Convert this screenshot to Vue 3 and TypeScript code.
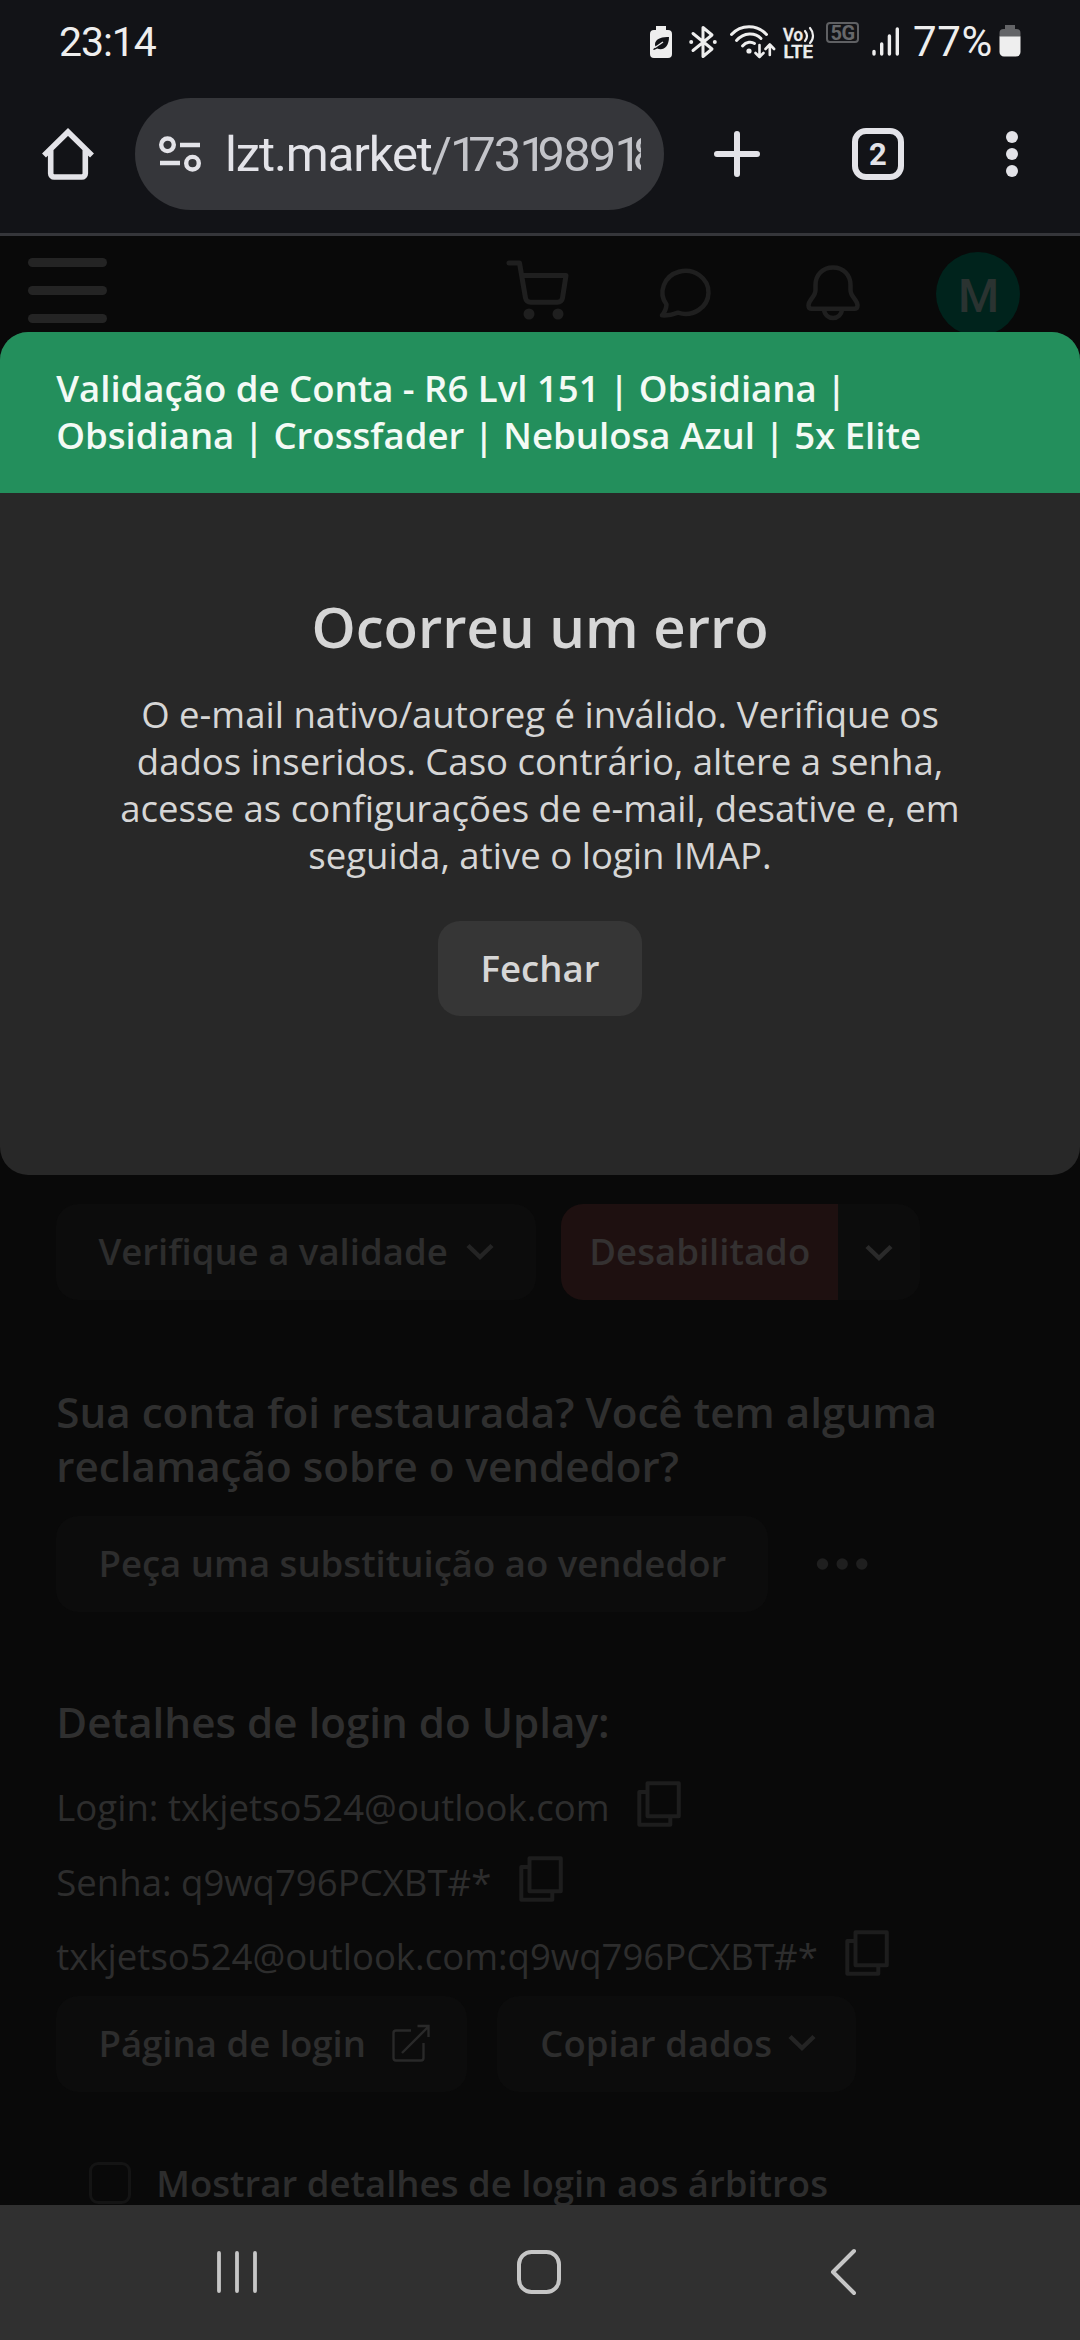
<script setup lang="ts">
interface Credential {
  text: string
}

const urlDigits: string[] = '173198918'.split('')

const credentials: Credential[] = [
  { text: 'Login: txkjetso524@outlook.com' },
  { text: 'Senha: q9wq796PCXBT#*' },
  { text: 'txkjetso524@outlook.com:q9wq796PCXBT#*' },
]
</script>

<template>
  <div class="phone">
    <header class="status-bar">
      <span class="clock">23:14</span>
      <div class="status-icons">
        <svg class="i-saver" width="22" height="32" viewBox="0 0 22 32">
          <path fill="#eee" d="M6 0h10v4h2a4 4 0 0 1 4 4v20a4 4 0 0 1-4 4H4a4 4 0 0 1-4-4V8a4 4 0 0 1 4-4h2z" />
          <path fill="#121317" d="M19 11c-8-.6-14 2.400-14 7.400 0 1 .4 1.900.9 2.600L3 23.200l1 .8 3.200-1.500c5.800 2.300 11.800-1.300 11.800-11.500z" />
          <path fill="none" stroke="#eee" stroke-width="1.300" d="M5 21.500 13 16" />
        </svg>
        <svg class="i-bt" width="28" height="32" viewBox="0 0 28 32">
          <path fill="none" stroke="#eee" stroke-width="3" stroke-linejoin="round" stroke-linecap="round" d="M4 7.500l19 15.500-9 7.500v-29l9 7.500L4 24.500" />
          <circle cx="2.200" cy="16" r="2" fill="#eee" /><circle cx="25.800" cy="16" r="2" fill="#eee" />
        </svg>
        <svg class="i-wifi" width="46" height="34" viewBox="0 0 46 34">
          <g fill="none" stroke="#eee" stroke-width="3" stroke-linecap="round">
            <path d="M1.500 9.500C11-.8 27-.8 36.500 9.500" />
            <path d="M6.500 15.500C14 7.200 25 7.200 31 13.500" />
            <path d="M12.500 21c4-4.500 9-4.500 12-2.500" />
            <path stroke-width="2.600" stroke-linejoin="round" d="M29.500 20v12M25.500 28l4 4 4-4M39.800 30V19.500M35.500 24l4.300-4.500 4.300 4.500" />
          </g>
          <circle cx="19" cy="26" r="2.600" fill="#eee" />
        </svg>
        <svg class="i-volte" width="32" height="34" viewBox="0 0 32 34">
          <text x="0" y="14.500" textLength="20" lengthAdjust="spacingAndGlyphs" class="tiny">Vo</text>
          <path fill="none" stroke="#eee" stroke-width="2.200" stroke-linecap="round" d="M22 5c2.400 3 2.400 7 0 10M27 2c4 4.600 4 11 0 15" />
          <text x="0.500" y="32" textLength="29.500" lengthAdjust="spacingAndGlyphs" class="tiny">LTE</text>
        </svg>
        <span class="badge-5g">5G</span>
        <svg class="i-signal" width="28" height="30" viewBox="0 0 28 30">
          <path fill="none" stroke="#eee" stroke-width="3.400" stroke-linecap="round" d="M2 24.500v2.500M9.700 17v10M17.400 9v18M25.300 2v25" />
        </svg>
        <span class="percent">77%</span>
        <svg class="i-battery" width="22" height="32" viewBox="0 0 22 32">
          <path fill="#636467" d="M6 0h10v4h1.500a4 4 0 0 1 4 4v4H.5V8a4 4 0 0 1 4-4H6z" />
          <path fill="#eee" d="M.5 11.500h21V27a4.500 4.500 0 0 1-4.500 4.500H5A4.500 4.500 0 0 1 .5 27z" />
        </svg>
      </div>
    </header>

    <nav class="toolbar">
      <svg class="i-home" width="52" height="52" viewBox="0 0 52 52">
        <path fill="none" stroke="#e3e3e8" stroke-width="5.600" stroke-linejoin="miter" d="M2 27.500 26 4l24 23.500M8.700 22v23.500a3.500 3.500 0 0 0 3.500 3.500h27.600a3.500 3.500 0 0 0 3.500-3.500V22" />
      </svg>
      <div class="address">
        <svg class="i-tune" width="42" height="36" viewBox="0 0 42 36">
          <g fill="none" stroke="#e3e3e8" stroke-width="4.400">
            <circle cx="8.500" cy="8.800" r="6.300" /><path d="M21 9h20M1 27h20" /><circle cx="33.500" cy="27.200" r="6.300" />
          </g>
        </svg>
        <div class="url"><span class="host">lzt.market</span><span class="path"><span>/</span><span v-for="(d, i) in urlDigits" :key="i" :class="{ one: d === '1' }">{{ d }}</span></span></div>
      </div>
      <svg class="i-plus" width="48" height="48" viewBox="0 0 48 48">
        <path fill="none" stroke="#e3e3e8" stroke-width="6" stroke-linecap="round" d="M24 4v40M4 24h40" />
      </svg>
      <span class="tabs">2</span>
      <svg class="i-more" width="12" height="48" viewBox="0 0 12 48">
        <g fill="#e3e3e8"><circle cx="6" cy="7" r="6" /><circle cx="6" cy="24" r="6" /><circle cx="6" cy="41" r="6" /></g>
      </svg>
    </nav>

    <div class="page">
      <div class="site-header">
        <div class="burger"><i></i><i></i><i></i></div>
        <svg class="i-cart" width="64" height="60" viewBox="0 0 64 60">
          <path fill="none" stroke="#1f1f1f" stroke-width="5" stroke-linecap="round" stroke-linejoin="round" d="M3 3h10.500l6 35a5 5 0 0 0 5 4.300h27a5 5 0 0 0 5-4.300L60 15.500H16" />
          <circle cx="23" cy="54" r="5.500" fill="#1f1f1f" /><circle cx="52" cy="54" r="5.500" fill="#1f1f1f" />
        </svg>
        <svg class="i-chat" width="52" height="50" viewBox="0 0 52 50">
          <path fill="none" stroke="#1f1f1f" stroke-width="4.500" stroke-linejoin="round" d="M7.500 36.500A23 21.500 0 1 1 19 44.700c-5 2-10.500 3-16 2.600C6 44 7.300 40 7.500 36.500z" />
        </svg>
        <svg class="i-bell" width="54" height="56" viewBox="0 0 54 56">
          <path fill="none" stroke="#1f1f1f" stroke-width="4.500" stroke-linejoin="round" d="M27 2.500c-10.500 0-17.500 7.500-17.500 17.500v5c0 7-7 9.500-7 15.500 0 2 1.300 3.300 3.300 3.300h42.400c2 0 3.300-1.300 3.300-3.300 0-6-7-8.500-7-15.500v-5c0-10-7-17.500-17.500-17.500zM18 44c1 12 17 12 18 0" />
        </svg>
        <span class="avatar">M</span>
      </div>

      <main class="content">
        <div class="row">
          <div class="btn check"><span>Verifique a validade</span>
            <svg width="28" height="17" viewBox="0 0 28 17"><path class="chev" d="M2 2.500l12 11.500L26 2.500" /></svg>
          </div>
          <div class="split">
            <div class="danger"><span>Desabilitado</span></div>
            <div class="drop"><svg width="28" height="17" viewBox="0 0 28 17"><path class="chev light" d="M2 2.500l12 11.500L26 2.500" /></svg></div>
          </div>
        </div>

        <h2 class="question">Sua conta foi restaurada? Você tem alguma<br />reclamação sobre o vendedor?</h2>

        <div class="row">
          <div class="btn replace"><span>Peça uma substituição ao vendedor</span></div>
          <svg class="i-dots" width="52" height="14" viewBox="0 0 52 14">
            <g fill="#1f1f1f"><circle cx="6.500" cy="7" r="5.700" /><circle cx="26.200" cy="7" r="5.700" /><circle cx="45.800" cy="7" r="5.700" /></g>
          </svg>
        </div>

        <h2 class="login-title">Detalhes de login do Uplay:</h2>

        <div v-for="c in credentials" :key="c.text" class="credential">
          <span>{{ c.text }}</span>
          <svg width="44" height="46" viewBox="0 0 44 46">
            <path fill="none" stroke="#1d1d1d" stroke-width="4" stroke-linejoin="round" d="M10.500 2.300h31.300v33H10.500zM10.500 11H2.300v32.700h31V35.500" />
          </svg>
        </div>

        <div class="row actions">
          <div class="btn login"><span>Página de login</span>
            <svg width="38" height="38" viewBox="0 0 38 38"><path fill="none" stroke="#292929" stroke-width="2.400" d="M19 6.500H4a2.500 2.500 0 0 0-2.500 2.500v25A2.500 2.500 0 0 0 4 36.500h25a2.500 2.500 0 0 0 2.500-2.500V19M10 29 36 3M25.500 2h11v11" /></svg>
          </div>
          <div class="btn copy"><span>Copiar dados</span>
            <svg width="28" height="17" viewBox="0 0 28 17"><path class="chev" d="M2 2.500l12 11.500L26 2.500" /></svg>
          </div>
        </div>

        <label class="consent"><i class="box"></i><span>Mostrar detalhes de login aos árbitros</span></label>
      </main>

      <section class="dialog">
        <div class="dialog-title">Validação de Conta - R6 Lvl 151 | Obsidiana |<br />Obsidiana | Crossfader | Nebulosa Azul | 5x Elite</div>
        <div class="dialog-body">
          <h1>Ocorreu um erro</h1>
          <p>O e-mail nativo/autoreg é inválido. Verifique os<br />dados inseridos. Caso contrário, altere a senha,<br />acesse as configurações de e-mail, desative e, em<br />seguida, ative o login IMAP.</p>
          <button type="button">Fechar</button>
        </div>
      </section>
    </div>

    <footer class="system-nav">
      <svg width="42" height="46" viewBox="0 0 42 46"><path fill="none" stroke="#c6c6c6" stroke-width="3.800" stroke-linecap="round" d="M3 4v38M21 4v38M39 4v38" /></svg>
      <svg class="i-navhome" width="46" height="46" viewBox="0 0 46 46"><rect x="3" y="3" width="40" height="40" rx="12.500" fill="none" stroke="#c6c6c6" stroke-width="4" /></svg>
      <svg width="28" height="48" viewBox="0 0 28 48"><path fill="none" stroke="#c6c6c6" stroke-width="4" stroke-linecap="round" stroke-linejoin="round" d="M25 3 4 24l21 21" /></svg>
    </footer>
  </div>
</template>

<style>
body {
  background: #090909;
}
</style>

<style scoped>
* {
  box-sizing: border-box;
}
.phone {
  width: 1080px;
  height: 2340px;
  display: flex;
  flex-direction: column;
  overflow: hidden;
  background: #090909;
  font-family: "Open Sans", "Noto Sans", sans-serif;
  font-size: 36.5625px;
  white-space: nowrap;
}
svg {
  display: block;
  flex: none;
  overflow: visible;
}

.status-bar {
  flex: none;
  height: 82px;
  padding: 0 59px;
  display: flex;
  justify-content: space-between;
  align-items: flex-start;
  background: #121317;
  color: #eee;
  font-family: Roboto, sans-serif;
}
.clock {
  height: 82px;
  line-height: 84px;
  font-size: 41px;
  letter-spacing: -1.100px;
}
.status-icons {
  display: flex;
  align-items: flex-start;
}
.i-saver { margin: 26px 17px 0 0; }
.i-bt { margin: 26px 13px 0 0; }
.i-wifi { margin: 25px 7px 0 0; }
.i-volte { margin: 26px 11px 0 0; }
.tiny {
  font: 500 18px Roboto, sans-serif;
  fill: #eee;
  stroke: #eee;
  stroke-width: 0.500px;
}
.badge-5g {
  width: 33px;
  height: 21px;
  margin: 22px 13px 0 0;
  border: 2px solid #5f6063;
  border-radius: 4px;
  color: #66676a;
  font-size: 20px;
  font-weight: 700;
  line-height: 18px;
  text-align: center;
  letter-spacing: -0.500px;
}
.i-signal { margin: 27px 13px 0 0; }
.percent {
  width: 80px;
  height: 82px;
  margin-right: 6px;
  font-size: 42px;
  letter-spacing: 0.600px;
  line-height: 84px;
}
.i-battery { margin-top: 25px; }

.toolbar {
  flex: none;
  height: 154px;
  padding: 16px 62px 23px 42px;
  display: flex;
  align-items: center;
  background: #121317;
  border-bottom: 3px solid #35363a;
}
.address {
  width: 529px;
  height: 112px;
  margin: 0 49px 0 41px;
  padding: 0 22px 0 24px;
  display: flex;
  align-items: center;
  gap: 24px;
  border-radius: 56px;
  background: #35363a;
}
.url {
  width: 416px;
  height: 112px;
  overflow: hidden;
  font-family: Roboto, sans-serif;
  font-size: 49px;
  line-height: 113px;
  color: #e3e3e8;
}
.host { letter-spacing: -1.100px; }
.path {
  color: #c3c4c9;
  letter-spacing: -1.900px;
}
.one { letter-spacing: -9.500px; }
.i-plus { margin-right: 91px; }
.tabs {
  width: 52px;
  height: 52px;
  margin-right: 102px;
  border: 6px solid #e3e3e8;
  border-radius: 14px;
  color: #e3e3e8;
  font: 700 31px/41px Roboto, sans-serif;
  text-align: center;
}

.page {
  position: relative;
  flex: none;
  height: 1969px;
  overflow: hidden;
}
.site-header {
  height: 116px;
  padding: 0 59px 0 28px;
  display: flex;
  align-items: center;
}
.burger {
  display: flex;
  flex-direction: column;
  gap: 19px;
  margin: 0 399px 7px 0;
}
.burger i {
  width: 79px;
  height: 9px;
  border-radius: 5px;
  background: #242424;
}
.i-cart { margin: 0 89px 8px 0; }
.i-chat { margin: 0 95px 3px 0; }
.i-bell { margin: 0 76px 2px 0; }
.avatar {
  width: 84px;
  height: 84px;
  padding-left: 1px;
  border-radius: 50%;
  background: #00231c;
  color: #2a3331;
  font: 500 47px/88px Roboto, sans-serif;
  text-align: center;
}

.content {
  padding: 852px 56.250px 0;
  color: #2d2d2d;
}
.row {
  display: flex;
  align-items: center;
}
.btn {
  height: 96px;
  padding: 0 42.200px 2px;
  display: flex;
  align-items: center;
  border-radius: 22px;
  background: #0c0c0c;
  font-weight: 600;
}
.chev {
  fill: none;
  stroke: #242424;
  stroke-width: 4.500;
}
.chev.light { stroke: #2a2a2a; }
.check {
  width: 480px;
  justify-content: space-between;
  margin-right: 25px;
}
.split {
  display: flex;
  height: 96px;
  border-radius: 22px;
  overflow: hidden;
}
.danger {
  width: 277px;
  padding-bottom: 2px;
  display: flex;
  align-items: center;
  justify-content: center;
  background: #1e1010;
  color: #343131;
  font-weight: 600;
}
.drop {
  width: 82px;
  display: flex;
  align-items: center;
  justify-content: center;
  background: #0c0c0c;
}
h2 {
  margin: 0;
  color: #2f2f2f;
  font-size: 42.1875px;
  line-height: 54px;
  font-weight: 600;
}
.question { margin: 85px 0 23px; }
.replace { width: 712px; margin-right: 48px; }
.login-title { margin: 83px 0 22px; }
.credential {
  height: 74.600px;
  display: flex;
  align-items: flex-start;
  line-height: 74px;
}
.credential svg { margin: 10px 0 0 27.500px; }
.credential span { margin-top: -1px; }
.actions { margin-top: 1px; }
.login {
  width: 411px;
  margin-right: 30px;
  padding-right: 37px;
  justify-content: space-between;
}
.copy {
  width: 359px;
  padding-right: 40px;
  padding-left: 43px;
  justify-content: space-between;
}
.consent {
  display: flex;
  align-items: flex-start;
  margin: 70px 0 0 33px;
  font-weight: 600;
  line-height: 42px;
}
.box {
  width: 42px;
  height: 42px;
  margin-right: 25px;
  border: 3px solid #141414;
  border-radius: 9px;
}

.dialog {
  position: absolute;
  left: 0;
  top: 96px;
  width: 1080px;
  height: 843px;
  border-radius: 28px;
  overflow: hidden;
  background: #282828;
}
.dialog-title {
  height: 161px;
  padding: 33px 56.250px 0;
  background: #238f5c;
  color: #f3faf5;
  font-weight: 600;
  line-height: 47px;
}
.dialog-body {
  display: flex;
  flex-direction: column;
  align-items: center;
  color: #d6d6d6;
  text-align: center;
}
h1 {
  margin: 96px 0 0;
  font-size: 56.250px;
  line-height: 74px;
  font-weight: 600;
}
p {
  margin: 28px 0 0;
  line-height: 47px;
}
button {
  width: 204px;
  height: 95px;
  margin-top: 42px;
  padding: 0 0 2px;
  border: 0;
  border-radius: 22px;
  background: #363636;
  color: #d6d6d6;
  font: 600 36.5625px "Open Sans", sans-serif;
}

.system-nav {
  flex: none;
  height: 135px;
  padding: 0 223px 1px 216px;
  display: flex;
  align-items: center;
  justify-content: space-between;
  background: #303030;
}
.i-navhome { margin-right: 9px; }
</style>
